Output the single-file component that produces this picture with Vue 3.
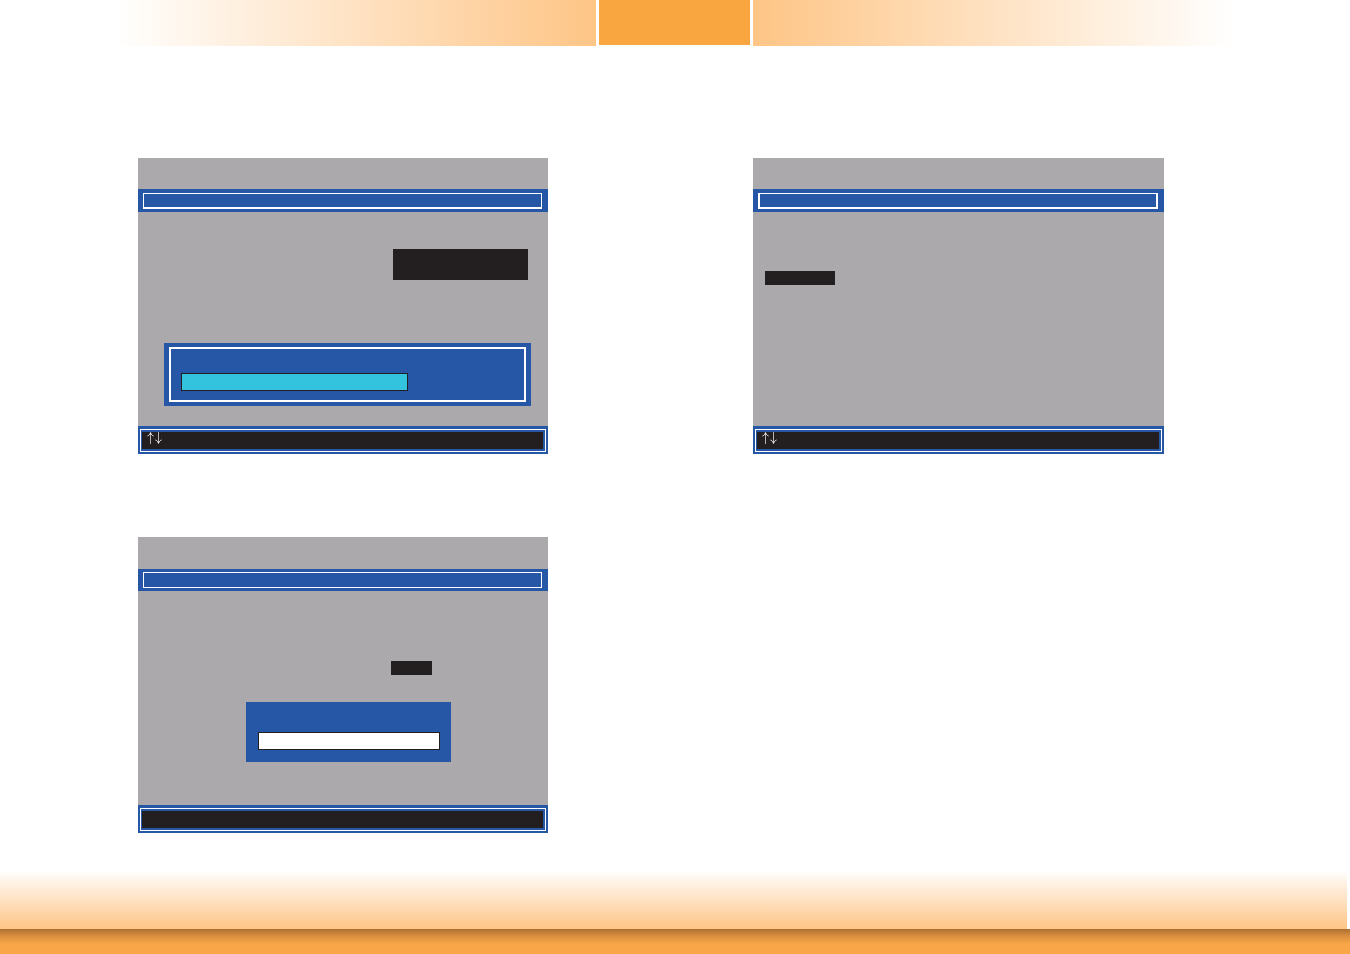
<template>
  <div class="page">
    <header class="banner">
      <div class="fade fade-left"></div>
      <div class="tab"></div>
      <div class="fade fade-right"></div>
    </header>

    <main class="screens">
      <section v-for="s in screens" :key="s.id" class="screen" :class="`screen-${s.id}`">
        <div class="title-bar">
          <div class="title-frame"></div>
        </div>

        <div class="body">
          <div class="highlight"></div>
          <!-- framed dialog -->
          <div v-if="s.id === 'path'" class="dialog dialog-framed">
            <div class="dialog-frame">
              <input v-model="filePath" class="field field-cyan" type="text" aria-label="File path" />
            </div>
          </div>
          <!-- plain dialog -->
          <div v-if="s.id === 'value'" class="dialog dialog-plain">
            <input v-model="value" class="field" type="text" aria-label="Value" />
          </div>
        </div>

        <div class="status">
          <div class="status-line">
            <div class="status-keys">
              <svg v-if="s.arrows" class="arrows" viewBox="0 0 16 12" role="img" aria-label="Up and down">
                <path class="stem" d="M3.5 1V12M11.5 0V11" />
                <path class="head" d="M0.5 4C2 3.4 3 2.2 3.5 0.6C4 2.2 5 3.4 6.5 4" />
                <path class="head" d="M8.5 8C10 8.6 11 9.8 11.5 11.4C12 9.8 13 8.6 14.5 8" />
              </svg>
            </div>
          </div>
        </div>
      </section>
    </main>

    <footer class="bottom">
      <div class="bottom-fade"></div>
      <div class="bottom-bar"></div>
    </footer>
  </div>
</template>

<script setup>
import { ref } from 'vue'

const screens = [
  { id: 'path', arrows: true },
  { id: 'menu', arrows: true },
  { id: 'value', arrows: false }
]

const filePath = ref('')
const value = ref('')
</script>

<style>
body {
  margin: 0;
  background: #fff;
}
</style>

<style scoped>
.page {
  display: flex;
  flex-direction: column;
  min-height: 100vh;
  font-family: "Liberation Sans", Arial, sans-serif;
}

/* top banner */
.banner {
  display: grid;
  grid-template-columns: 1fr 151px 1fr;
  gap: 3px;
  height: 46px;
  padding-right: 1px;
}
.fade-left {
  background: linear-gradient(90deg, #fff 19%, #fec586 100%);
}
.fade-right {
  background: linear-gradient(270deg, #fff 19%, #fec586 100%);
}
.tab {
  height: 45px;
  background: #f9a640;
}

/* screens */
.screens {
  display: grid;
  grid-template-columns: 410fr 411fr;
  gap: 83px 205px;
  padding: 112px 186px 37px 138px;
}
.screen {
  display: flex;
  flex-direction: column;
  padding-top: 31px;
  background: #aba9ab;
}
.title-bar {
  height: 23px;
  box-sizing: border-box;
  padding: 4px 6px 3px 5px;
  background: #2656a6;
}
.title-frame {
  height: 100%;
  box-sizing: border-box;
  border: 1px solid #fff;
  border-bottom-width: 2px;
}
.screen-menu .title-frame {
  border-width: 1px 2px 2px;
}
.screen-value {
  padding-top: 32px;
}
.screen-value .title-bar {
  height: 22px;
  padding-top: 3px;
}
.screen-value .title-frame {
  border-width: 1px;
}

.body {
  display: flex;
  flex-direction: column;
  height: 214px;
  box-sizing: border-box;
}
.screen-path .body {
  padding: 37px 17px 20px 26px;
}
.screen-menu .body {
  padding: 59px 12px;
}
.screen-value .body {
  padding: 70px 97px 43px 108px;
}

.highlight {
  background: #231f20;
}
.screen-path .highlight {
  align-self: flex-end;
  width: 135px;
  height: 31px;
  margin-right: 3px;
}
.screen-menu .highlight {
  width: 70px;
  height: 14px;
}
.screen-value .highlight {
  align-self: flex-end;
  width: 41px;
  height: 14px;
  margin-right: 19px;
}

.dialog {
  box-sizing: border-box;
  margin-top: auto;
  background: #2656a6;
}
.dialog-framed {
  height: 63px;
  padding: 4px 5px;
}
.dialog-frame {
  height: 100%;
  box-sizing: border-box;
  padding: 24px 10px 0;
  border: 2px solid #fff;
}
.dialog-plain {
  height: 60px;
  padding: 30px 11px 12px 12px;
}
.field {
  display: block;
  width: 100%;
  height: 18px;
  box-sizing: border-box;
  margin: 0;
  padding: 0 4px;
  border: 1px solid #231f20;
  border-radius: 0;
  outline: none;
  background: #fff;
  color: #231f20;
  font-family: inherit;
  font-size: 12px;
}
.field-cyan {
  width: 227px;
  background: #34c3de;
}

/* status line */
.status {
  height: 28px;
  box-sizing: border-box;
  padding: 3px 2px 2px;
  background: #2656a6;
}
.status-line {
  height: 100%;
  box-sizing: border-box;
  padding: 2px 2px 2px 1px;
  border: 1px solid #fff;
}
.status-keys {
  height: 100%;
  padding-left: 5px;
  background: #231f20;
}
.arrows {
  display: block;
  width: 16px;
  height: 12px;
  fill: none;
}
.stem {
  stroke: #b5b3b4;
}
.head {
  stroke: #fff;
}

/* bottom band */
.bottom {
  margin-top: auto;
}
.bottom-fade {
  height: 59px;
  margin-right: 3px;
  background: linear-gradient(180deg, #fff 0%, #fec586 100%);
}
.bottom-bar {
  height: 25px;
  background: linear-gradient(180deg, #ad7033 0%, #d98f3f 28%, #f9a648 60%);
}
</style>
